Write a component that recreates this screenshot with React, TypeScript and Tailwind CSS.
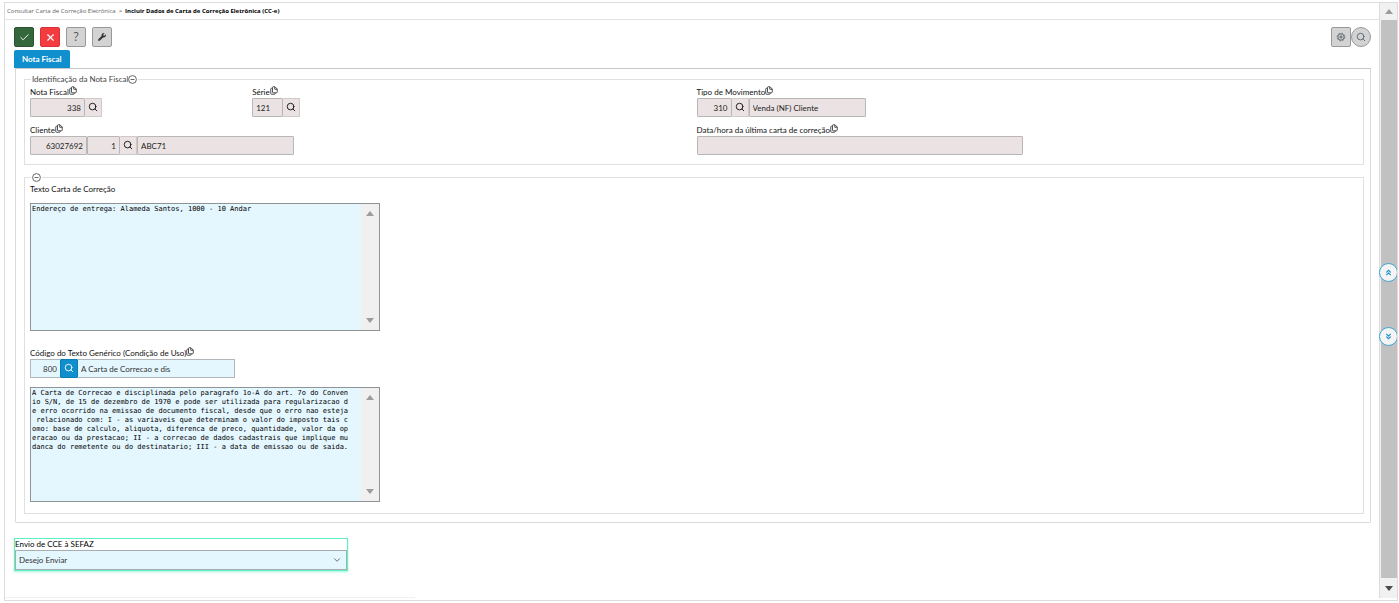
import React, { useState } from "react";
import { Check, X, Search, ChevronDown, ChevronsUp, ChevronsDown } from "lucide-react";
import { FaWrench } from "react-icons/fa";

const correctionText = "Endereço de entrega: Alameda Santos, 1000 - 10 Andar";

const genericText = [
  "A Carta de Correcao e disciplinada pelo paragrafo 1o-A do art. 7o do Conven",
  "io S/N, de 15 de dezembro de 1970 e pode ser utilizada para regularizacao d",
  "e erro ocorrido na emissao de documento fiscal, desde que o erro nao esteja",
  " relacionado com: I - as variaveis que determinam o valor do imposto tais c",
  "omo: base de calculo, aliquota, diferenca de preco, quantidade, valor da op",
  "eracao ou da prestacao; II - a correcao de dados cadastrais que implique mu",
  "danca do remetente ou do destinatario; III - a data de emissao ou de saida.",
].join("\n");

function CopyIcon() {
  return (
    <svg viewBox="0 0 16 18" className="h-[9px] w-2" fill="none" stroke="#333" strokeWidth="1.7" strokeLinejoin="round">
      <path d="M6.5 1.5H10L14.500 6v6q0 1.500-1.500 1.500H6.500Q5 13.500 5 12V3q0-1.500 1.500-1.500z" />
      <path d="M9.500 2v4.500h5" />
      <path d="M4.500 4.500H3Q1.500 4.500 1.500 6v9q0 1.500 1.500 1.500h6q1.500 0 1.500-1.500v-1" />
    </svg>
  );
}

function MinusCircle() {
  return (
    <svg viewBox="0 0 18 18" className="size-[9px]" fill="none" stroke="#555" strokeWidth="1.8">
      <circle cx="9" cy="9" r="7.8" />
      <path d="M5 9h8" />
    </svg>
  );
}

function GearIcon() {
  return (
    <svg viewBox="0 0 20 20" className="size-[10px]" fill="none" stroke="#56616b">
      <circle cx="10" cy="10" r="6.3" strokeWidth="1.8" />
      <circle cx="10" cy="10" r="7.8" strokeWidth="1.6" strokeDasharray="3.06 3.06" />
      <circle cx="10" cy="10" r="2.2" strokeWidth="2" />
    </svg>
  );
}

function FieldLabel({ htmlFor, children }: { htmlFor: string; children: React.ReactNode }) {
  return (
    <div className="flex h-[11px] items-start">
      <label htmlFor={htmlFor} className="leading-[11px] whitespace-nowrap">
        {children}
      </label>
      <button type="button" aria-label="Copiar" className="-mt-px">
        <CopyIcon />
      </button>
    </div>
  );
}

const box = "h-[19px] rounded-[1px] border border-[#b9b6b6] bg-[#ebe2e3] px-[3px] text-[#222]";
const lookup = "flex h-[19px] w-[17px] items-center justify-center rounded-[1px] border border-l-0 border-[#cfc9c9] bg-[#ebe2e3] pb-px";

function LookupButton({ className }: { className: string }) {
  return (
    <button type="button" aria-label="Pesquisar" className={className}>
      <Search className="size-[10px]" strokeWidth={2.2} />
    </button>
  );
}

function TextBox({ id, label, value, className }: { id: string; label: string; value: string; className: string }) {
  return (
    <div className="flex w-[350px] border border-[#8f9496] bg-[#e4f6fe]">
      <textarea
        id={id}
        aria-label={label}
        defaultValue={value}
        wrap="off"
        className={`block min-w-0 flex-1 resize-none overflow-hidden px-px pt-px font-['DejaVu_Sans_Mono',monospace] text-[7px] leading-[9px] text-black outline-none ${className}`}
      />
      <div aria-hidden="true" className="flex w-[18px] flex-col items-center justify-between bg-[#f0f0f0] py-[7px]">
        <svg viewBox="0 0 8 5" className="h-[5px] w-2" fill="#9c9c9c"><path d="M0 5L4 0l4 5z" /></svg>
        <svg viewBox="0 0 8 5" className="h-[5px] w-2" fill="#9c9c9c"><path d="M0 0l4 5 4-5z" /></svg>
      </div>
    </div>
  );
}

const tool = "flex size-5 items-center justify-center rounded-[2px] border";

export default function App() {
  const [send, setSend] = useState("Desejo Enviar");
  return (
    <div className="flex min-h-screen bg-white pt-[2px] pr-px pb-[2px] pl-1 font-['Lato','Open_Sans',sans-serif] text-[8px] text-[#111]">
      <div className="relative flex flex-1 border border-[#dcdcdc]">
        <div className="flex min-w-0 flex-1 flex-col">
          <nav aria-label="Trilha" className="flex h-[17px] items-center gap-[3px] border-b border-[#e2e2e2] px-[2px] font-['Open_Sans','Noto_Sans',sans-serif] text-[6px]">
            <a href="#consultar" className="text-[#666]">Consultar Carta de Correção Eletrônica</a>
            <span>&gt;</span>
            <span className="font-bold text-black">Incluir Dados de Carta de Correção Eletrônica (CC-e)</span>
          </nav>

          <main className="flex flex-1 flex-col pt-[7px] pr-2 pl-[9px]">
            <div className="flex items-center justify-between">
              <div className="flex gap-[6px]">
                <button type="button" aria-label="Confirmar" className={`${tool} border-[#2c5433] bg-[#35673d] text-white`}>
                  <Check className="size-[11px]" />
                </button>
                <button type="button" aria-label="Cancelar" className={`${tool} border-[#d93238] bg-[#f43c40] text-white`}>
                  <X className="size-[11px]" strokeWidth={2.5} />
                </button>
                <button type="button" aria-label="Ajuda" className={`${tool} border-[#999] bg-[#d3d3d3] font-['Open_Sans',sans-serif] text-xs text-[#555]`}>
                  ?
                </button>
                <button type="button" aria-label="Ferramentas" className={`${tool} border-[#999] bg-[#d3d3d3] text-[#333]`}>
                  <FaWrench className="size-2" />
                </button>
              </div>
              <div className="flex">
                <button type="button" aria-label="Configurações" className={`${tool} border-[#999] bg-[#d3d3d3]`}>
                  <GearIcon />
                </button>
                <button type="button" aria-label="Buscar" className="flex size-5 items-center justify-center rounded-full border border-[#999] bg-[#d3d3d3] text-[#5c6670]">
                  <Search className="size-[10px]" strokeWidth={2.2} />
                </button>
              </div>
            </div>

            <div role="tablist" className="mt-[3px] flex">
              <button type="button" role="tab" aria-selected="true" className="h-[18px] rounded-t-[2px] bg-[#0f8fce] px-2 font-bold text-white">
                Nota Fiscal
              </button>
            </div>

            <section className="ml-px flex flex-col gap-[6px] rounded-b-[2px] border border-t-[#c9c9c9] border-r-[#d9d9d9] border-b-[#d9d9d9] border-l-[#d9d9d9] pt-1 pr-[6px] pb-2 pl-2">
              <fieldset className="border border-[#e0e0e0] pb-[9px] pl-[5px]">
                <legend className="ml-px flex h-3 items-center px-px text-[#444]">
                  <span className="leading-3">Identificação da Nota Fiscal</span>
                  <button type="button" aria-label="Recolher identificação"><MinusCircle /></button>
                </legend>
                <div className="grid grid-cols-12 gap-y-2 pt-[2px]">
                  <div className="col-span-2">
                    <FieldLabel htmlFor="nota">Nota Fiscal</FieldLabel>
                    <div className="flex">
                      <input id="nota" readOnly defaultValue="338" className={`${box} w-[55px] text-right`} />
                      <LookupButton className={lookup} />
                    </div>
                  </div>
                  <div className="col-span-4">
                    <FieldLabel htmlFor="serie">Série</FieldLabel>
                    <div className="flex">
                      <input id="serie" readOnly defaultValue="121" className={`${box} w-[31px]`} />
                      <LookupButton className={lookup} />
                    </div>
                  </div>
                  <div className="col-span-6">
                    <FieldLabel htmlFor="tipo">Tipo de Movimento</FieldLabel>
                    <div className="flex">
                      <input id="tipo" readOnly defaultValue="310" className={`${box} w-[35px] text-right`} />
                      <LookupButton className={lookup} />
                      <input aria-label="Descrição do tipo de movimento" readOnly defaultValue="Venda (NF) Cliente" className={`${box} w-[117px]`} />
                    </div>
                  </div>
                  <div className="col-span-6">
                    <FieldLabel htmlFor="cliente">Cliente</FieldLabel>
                    <div className="flex">
                      <input id="cliente" readOnly defaultValue="63027692" className={`${box} w-[57px] text-right`} />
                      <input aria-label="Loja do cliente" readOnly defaultValue="1" className={`${box} w-[33px] text-right`} />
                      <LookupButton className={lookup} />
                      <input aria-label="Nome do cliente" readOnly defaultValue="ABC71" className={`${box} w-[157px]`} />
                    </div>
                  </div>
                  <div className="col-span-6">
                    <FieldLabel htmlFor="data">Data/hora da última carta de correção</FieldLabel>
                    <div className="flex">
                      <input id="data" readOnly defaultValue="" className={`${box} w-[326px]`} />
                    </div>
                  </div>
                </div>
              </fieldset>

              <fieldset className="border border-[#e0e0e0] pb-[11px] pl-[5px]">
                <legend className="ml-px flex h-3 items-center px-px">
                  <button type="button" aria-label="Recolher texto"><MinusCircle /></button>
                </legend>
                <label htmlFor="texto" className="block h-5 leading-[12px]">Texto Carta de Correção</label>
                <TextBox id="texto" label="Texto Carta de Correção" value={correctionText} className="h-[126px]" />
                <div className="mt-[17px] mb-[9px]">
                  <FieldLabel htmlFor="codigo">Código do Texto Genérico (Condição de Uso)</FieldLabel>
                  <div className="flex">
                    <input id="codigo" defaultValue="800" className="h-[19px] w-[30px] rounded-l-[1px] border border-r-0 border-[#b0b6b9] bg-[#e4f6fe] px-[3px] text-right text-[#333]" />
                    <LookupButton className="flex h-[19px] w-[18px] items-center justify-center rounded-[1px] border border-[#0b7cb4] bg-[#0f8fce] pb-px text-white" />
                    <input aria-label="Descrição do texto genérico" defaultValue="A Carta de Correcao e dis" className="h-[19px] w-[157px] rounded-r-[1px] border border-l-0 border-[#b0b6b9] bg-[#e4f6fe] px-[3px] text-[#333]" />
                  </div>
                </div>
                <TextBox id="generico" label="Texto genérico" value={genericText} className="h-[113px]" />
              </fieldset>
            </section>

            <div className="mt-[15px] w-[334px] border border-[#5ff0c4] shadow-[0_1px_2px_#9ff5dc]">
              <label htmlFor="envio" className="block h-[11px] leading-[11px] text-black">Envio de CCE à SEFAZ</label>
              <div className="relative">
                <select
                  id="envio"
                  value={send}
                  onChange={(e) => setSend(e.target.value)}
                  className="block h-5 w-full appearance-none border border-[#a9adaf] bg-[#e4f6fe] px-[3px] text-[#333]"
                >
                  <option>Desejo Enviar</option>
                  <option>Não Desejo Enviar</option>
                </select>
                <ChevronDown className="pointer-events-none absolute top-[5px] right-[5px] size-[10px] text-[#555]" />
              </div>
            </div>
            <div className="mt-auto mb-[2px] -ml-[9px] w-[410px] border-t border-[#f1f1f1]" />
          </main>
        </div>

        <aside aria-hidden="true" className="mb-[2px] flex w-[18px] flex-col border-l border-[#dcdcdc] bg-[#f1f1f1] pl-px">
          <div className="flex h-[17px] items-center justify-center">
            <svg viewBox="0 0 8 5" className="h-[5px] w-2" fill="#9c9c9c"><path d="M0 5L4 0l4 5z" /></svg>
          </div>
          <div className="flex-1 bg-[#c1c1c1]" />
          <div className="flex h-5 items-center justify-center">
            <svg viewBox="0 0 8 5" className="h-[5px] w-2" fill="#4a4a4a"><path d="M0 0l4 5 4-5z" /></svg>
          </div>
        </aside>

        <div className="absolute top-[260px] right-0 flex w-[18px] flex-col gap-[45px] overflow-hidden">
          <button type="button" aria-label="Ir para o início" className="flex size-[19px] items-center justify-center rounded-full border border-[#3ba5d5] bg-[#f4f4f4] text-[#1f93c9]">
            <ChevronsUp className="size-[9px]" strokeWidth={3} />
          </button>
          <button type="button" aria-label="Ir para o fim" className="flex size-[19px] items-center justify-center rounded-full border border-[#3ba5d5] bg-[#f4f4f4] text-[#1f93c9]">
            <ChevronsDown className="size-[9px]" strokeWidth={3} />
          </button>
        </div>
      </div>
    </div>
  );
}
